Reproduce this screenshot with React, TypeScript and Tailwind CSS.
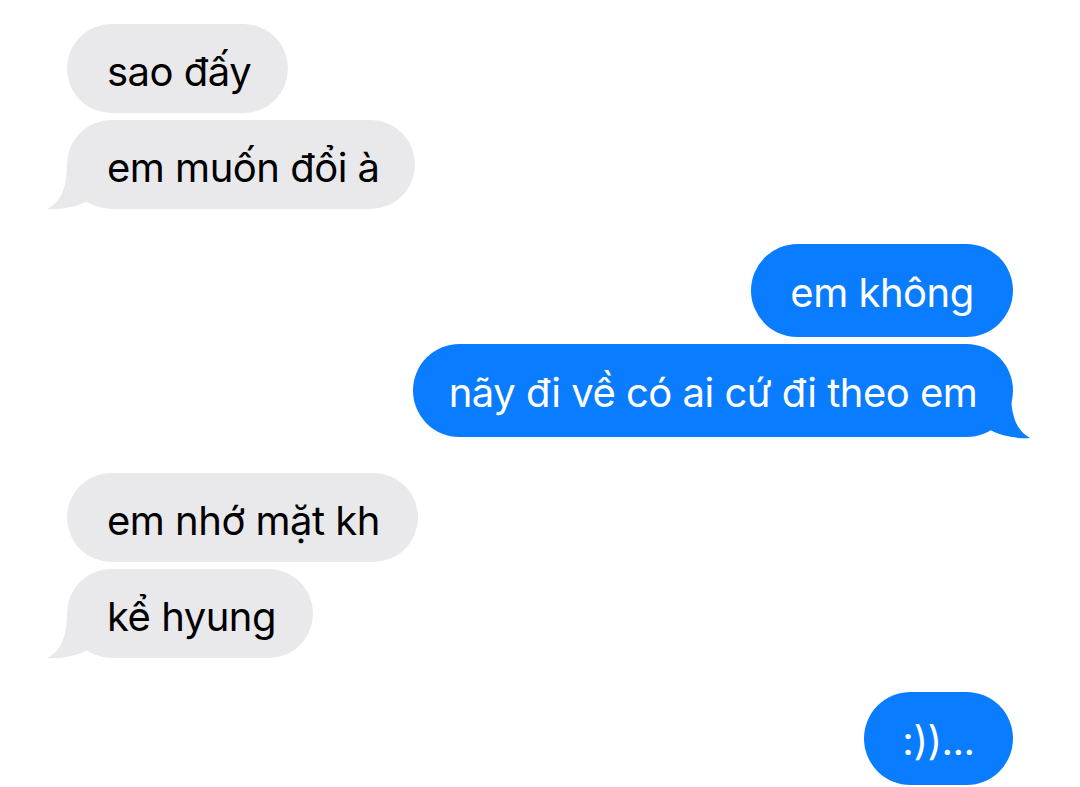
import React from "react";

const GREY = "#e9e9eb";
const BLUE = "#0a7cff";

function TailLeft() {
  return (
    <svg
      className="absolute left-[-24px] bottom-[-1px]"
      width="64"
      height="50"
      viewBox="0 0 64 50"
    >
      <path d="M24,3 C24,28 18,42 4,49 C18,50 33,47 45,41 L57,10 Z" fill={GREY} />
    </svg>
  );
}

function TailRight() {
  return (
    <svg
      className="absolute right-[-22px] bottom-[-2px]"
      width="64"
      height="50"
      viewBox="0 0 64 50"
    >
      <path d="M40,3 C40,28 46,42 59,49 C46,50 31,47 19,41 L7,10 Z" fill={BLUE} />
    </svg>
  );
}

function Grey({ text, w, tail }: { text: string; w: number; tail?: boolean }) {
  return (
    <div
      className="relative flex h-[89px] items-center rounded-[45px] bg-[#e9e9eb] pl-[40px] pt-[7px] text-[40px] leading-none text-black"
      style={{ width: w }}
    >
      {tail && <TailLeft />}
      <span className="relative whitespace-nowrap">{text}</span>
    </div>
  );
}

function Blue({ text, w, tail, h = 93 }: { text: string; w: number; tail?: boolean; h?: number }) {
  return (
    <div
      className="relative flex items-center justify-center rounded-[47px] bg-[#0a7cff] pt-[4px] text-[40px] leading-none text-white"
      style={{ width: w, height: h }}
    >
      {tail && <TailRight />}
      <span className="relative whitespace-nowrap">{text}</span>
    </div>
  );
}

export default function App() {
  return (
    <div
      className="h-[787px] w-[1080px] overflow-hidden bg-white px-[67px] pt-[24px]"
      style={{ fontFamily: "Inter, 'Noto Sans', sans-serif" }}
    >
      <div className="flex flex-col items-start gap-[7px] tracking-[-0.5px]">
        <Grey text="sao đấy" w={221} />
        <Grey text="em muốn đổi à" w={348} tail />
      </div>
      <div className="mt-[35px] flex flex-col items-end gap-[7px] tracking-[-0.5px]">
        <Blue text="em không" w={262} />
        <Blue text="nãy đi về có ai cứ đi theo em" w={600} tail />
      </div>
      <div className="mt-[36px] flex flex-col items-start gap-[7px] tracking-[-0.5px]">
        <Grey text="em nhớ mặt kh" w={351} />
        <Grey text="kể hyung" w={246} tail />
      </div>
      <div className="mt-[34px] flex flex-col items-end tracking-[-0.5px]">
        <Blue text=":))..." w={149} />
      </div>
    </div>
  );
}
